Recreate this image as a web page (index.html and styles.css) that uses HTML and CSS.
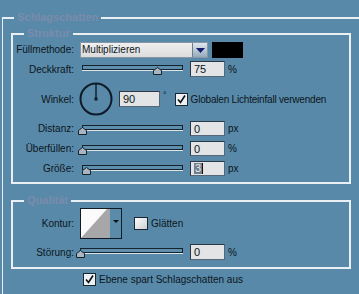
FILE: index.html
```html
<!DOCTYPE html>
<html lang="de">
<head>
<meta charset="utf-8">
<title>Schlagschatten</title>
<link rel="stylesheet" href="styles.css">
</head>
<body>
<div class="group outer">
  <div class="title">Schlagschatten</div>

  <div class="group inner struktur">
    <div class="title">Struktur</div>

    <div class="row r-mode">
      <span class="lbl">Füllmethode:</span>
      <div class="select">
        <span class="select-text">Multiplizieren</span>
        <span class="select-btn"><svg width="13" height="14" viewBox="0 0 13 14"><polygon points="2,5 11,5 6.5,10" fill="#141c6e"/></svg></span>
      </div>
      <div class="swatch"></div>
    </div>

    <div class="row r-opacity">
      <span class="lbl">Deckkraft:</span>
      <div class="slider"><div class="track"></div><svg class="thumb" style="left:71px" width="9" height="8" viewBox="0 0 9 8"><polygon points="0.5,7.5 0.5,3.5 4.5,0.5 8.5,3.5 8.5,7.5" fill="#a9b6c0" stroke="#16222c"/></svg></div>
      <div class="num">75</div>
      <span class="unit">%</span>
    </div>

    <div class="row r-angle">
      <span class="lbl">Winkel:</span>
      <svg class="dial" width="34" height="34" viewBox="0 0 34 34">
        <circle cx="17" cy="17" r="15.5" fill="none" stroke="#0e1a26" stroke-width="2"/>
        <line x1="17" y1="2" x2="17" y2="17" stroke="#0e1a26" stroke-width="1.4"/>
        <rect x="15.5" y="15.5" width="3" height="3" fill="#0e1a26"/>
      </svg>
      <div class="num wide">90</div>
      <span class="deg">°</span>
      <svg class="check" width="13" height="13" viewBox="0 0 13 13"><rect x="0.5" y="0.5" width="12" height="12" fill="#eef1f4" stroke="#1a2630"/><polyline points="3,6.5 5.5,9.5 10,2.5" fill="none" stroke="#0a0f14" stroke-width="1.6"/></svg>
      <span class="check-text tight">Globalen Lichteinfall verwenden</span>
    </div>

    <div class="row r-small">
      <span class="lbl">Distanz:</span>
      <div class="slider"><div class="track"></div><svg class="thumb" style="left:-4px" width="9" height="8" viewBox="0 0 9 8"><polygon points="0.5,7.5 0.5,3.5 4.5,0.5 8.5,3.5 8.5,7.5" fill="#a9b6c0" stroke="#16222c"/></svg></div>
      <div class="num">0</div>
      <span class="unit">px</span>
    </div>

    <div class="row r-small">
      <span class="lbl">Überfüllen:</span>
      <div class="slider"><div class="track"></div><svg class="thumb" style="left:-4px" width="9" height="8" viewBox="0 0 9 8"><polygon points="0.5,7.5 0.5,3.5 4.5,0.5 8.5,3.5 8.5,7.5" fill="#a9b6c0" stroke="#16222c"/></svg></div>
      <div class="num">0</div>
      <span class="unit">%</span>
    </div>

    <div class="row r-small">
      <span class="lbl">Größe:</span>
      <div class="slider"><div class="track"></div><svg class="thumb" style="left:0px" width="9" height="8" viewBox="0 0 9 8"><polygon points="0.5,7.5 0.5,3.5 4.5,0.5 8.5,3.5 8.5,7.5" fill="#a9b6c0" stroke="#16222c"/></svg></div>
      <div class="num"><span class="sel">3</span></div>
      <span class="unit">px</span>
    </div>
  </div>

  <div class="group inner qualitaet">
    <div class="title">Qualität</div>

    <div class="row r-contour">
      <span class="lbl">Kontur:</span>
      <svg class="contour" width="42" height="31" viewBox="0 0 42 31">
        <rect x="0" y="0" width="42" height="31" fill="#5b8bab"/>
        <rect x="1" y="1" width="29" height="29" fill="#a7a7a9"/>
        <polygon points="1,1 27,1 1,30" fill="#fbfbfb"/>
        <rect x="0.5" y="0.5" width="41" height="30" fill="none" stroke="#111b24"/>
        <polygon points="33,12 39,12 36,15" fill="#0a0f14"/>
      </svg>
      <svg class="check glatt" width="14" height="13" viewBox="0 0 14 13"><defs><linearGradient id="cg" x1="0" y1="0" x2="1" y2="1"><stop offset="0" stop-color="#ffffff"/><stop offset="1" stop-color="#c9ced3"/></linearGradient></defs><rect x="0.5" y="0.5" width="13" height="12" fill="url(#cg)" stroke="#1a2630"/></svg>
      <span class="check-text">Glätten</span>
    </div>

    <div class="row r-noise">
      <span class="lbl">Störung:</span>
      <div class="slider long"><div class="track"></div><svg class="thumb" style="left:-4px" width="9" height="8" viewBox="0 0 9 8"><polygon points="0.5,7.5 0.5,3.5 4.5,0.5 8.5,3.5 8.5,7.5" fill="#a9b6c0" stroke="#16222c"/></svg></div>
      <div class="num">0</div>
      <span class="unit">%</span>
    </div>
  </div>

  <div class="row r-global">
    <svg class="check" width="13" height="13" viewBox="0 0 13 13"><rect x="0.5" y="0.5" width="12" height="12" fill="#eef1f4" stroke="#1a2630"/><polyline points="3,6.5 5.5,9.5 10,2.5" fill="none" stroke="#0a0f14" stroke-width="1.6"/></svg>
    <span class="check-text">Ebene spart Schlagschatten aus</span>
  </div>
</div>
</body>
</html>
```

FILE: styles.css
```css
html, body {
  margin: 0;
  padding: 0;
  background: #5889a9;
}
body {
  width: 359px;
  height: 294px;
  overflow: hidden;
  font-family: "Liberation Sans", Arial, sans-serif;
  font-size: 10px;
  color: #0c1620;
}

.group {
  box-sizing: border-box;
  border: 2px solid #e9eff3;
}
.outer {
  margin: 17px 0 0 2px;
  width: 357px;
  height: 277px;
  border-left-width: 1px;
  border-right: 0;
  border-bottom: 0;
}
.title {
  width: fit-content;
  margin: -8px 0 0 11px;
  padding: 0 3px;
  background: #5889a9;
  font-weight: bold;
  font-size: 11px;
  line-height: 12px;
  color: #7a8cab;
}
.inner {
  width: 340px;
  margin-left: 8px;
}
.struktur {
  margin-top: 10px;
  padding-bottom: 6px;
}
.qualitaet {
  margin-top: 16px;
  padding-bottom: 7px;
}

.row {
  display: flex;
  align-items: center;
  white-space: nowrap;
}
.lbl {
  width: 61px;
  flex: none;
  text-align: right;
}

/* Füllmethode */
.r-mode { margin-top: 2px; height: 17px; }
.select {
  display: flex;
  align-items: stretch;
  box-sizing: border-box;
  width: 128px;
  height: 16px;
  margin-left: 6px;
  background: linear-gradient(#f0f0f0, #dcdcdc);
  border: 1px solid #8696a4;
}
.select-text {
  flex: 1;
  padding-left: 1px;
  line-height: 14px;
}
.select-btn {
  width: 14px;
  display: flex;
  align-items: center;
  justify-content: center;
  background: linear-gradient(#dfe7ee, #97aabb);
  border-left: 1px solid #6a7e90;
}
.swatch {
  width: 31px;
  height: 16px;
  margin-left: 4px;
  background: #000;
}

/* sliders */
.r-opacity { margin-top: 3px; height: 16px; }
.r-small { margin-top: 5px; height: 15px; }
.slider {
  position: relative;
  width: 101px;
  height: 8px;
  margin-left: 8px;
}
.slider.long {
  width: 103px;
  margin-left: 6px;
}
.track {
  box-sizing: border-box;
  height: 5px;
  border: 1px solid #15212b;
  background: #5f8fae;
  box-shadow: 0 1px 0 #dbe5ec;
}
.thumb {
  position: absolute;
  top: 2px;
}
.num {
  box-sizing: border-box;
  width: 35px;
  height: 100%;
  margin-left: 7px;
  padding-left: 3px;
  background: #e3e4e6;
  border: 1px solid #56677a;
  border-top-color: #2b3744;
  border-left-color: #2b3744;
  font-size: 11px;
  display: flex;
  align-items: center;
}
.unit {
  margin-left: 3px;
}
.sel {
  background: #737f8b;
  color: #e8ebee;
  padding: 0 1px;
  line-height: 11px;
  border-right: 1px solid #111;
}

/* Winkel */
.r-angle { margin-top: 5px; height: 34px; }
.dial { margin-left: 5px; flex: none; }
.num.wide {
  width: 41px;
  height: 16px;
  margin-left: 6px;
}
.deg {
  margin-left: 3px;
  align-self: flex-start;
  margin-top: 8px;
  font-size: 9px;
}
.check { flex: none; }
.r-angle .check { margin-left: 8px; }
.check-text { margin-left: 3px; }
.tight { letter-spacing: -0.2px; }

/* Qualität */
.r-contour { margin-top: 2px; height: 31px; }
.contour { margin-left: 6px; flex: none; }
.glatt { margin-left: 12px; }
.r-noise { margin-top: 5px; height: 16px; }

.r-global {
  margin-top: 4px;
  height: 13px;
  padding-left: 80px;
}
```
